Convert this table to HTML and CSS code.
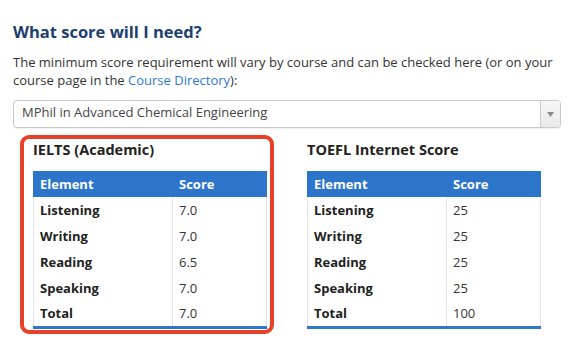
FILE: index.html
```html
<!DOCTYPE html>
<html lang="en">
<head>
<meta charset="utf-8">
<title>What score will I need?</title>
<link rel="stylesheet" href="styles.css">
</head>
<body>
<section class="scores">
  <h2 class="title">What score will I need?</h2>
  <p class="intro">The minimum score requirement will vary by course and can be checked here (or on your course page in the <a href="#" class="link">Course Directory</a>):</p>
  <div class="select">
    <span class="select-value">MPhil in Advanced Chemical Engineering</span>
    <span class="select-arrow"><svg width="7" height="5" viewBox="0 0 7 5"><path d="M0 0h7L3.5 5z" fill="#8a8a8a"/></svg></span>
  </div>
  <div class="tests">
    <div class="test highlight">
      <h3 class="test-name">IELTS (Academic)</h3>
      <table class="score-table">
        <thead><tr><th>Element</th><th>Score</th></tr></thead>
        <tbody>
          <tr><td>Listening</td><td>7.0</td></tr>
          <tr><td>Writing</td><td>7.0</td></tr>
          <tr><td>Reading</td><td>6.5</td></tr>
          <tr><td>Speaking</td><td>7.0</td></tr>
          <tr><td>Total</td><td>7.0</td></tr>
        </tbody>
      </table>
    </div>
    <div class="test">
      <h3 class="test-name">TOEFL Internet Score</h3>
      <table class="score-table">
        <thead><tr><th>Element</th><th>Score</th></tr></thead>
        <tbody>
          <tr><td>Listening</td><td>25</td></tr>
          <tr><td>Writing</td><td>25</td></tr>
          <tr><td>Reading</td><td>25</td></tr>
          <tr><td>Speaking</td><td>25</td></tr>
          <tr><td>Total</td><td>100</td></tr>
        </tbody>
      </table>
    </div>
  </div>
</section>
</body>
</html>
```
FILE: styles.css
```css
html, body {
  margin: 0;
  padding: 0;
  background: #fff;
}
body {
  font-family: "Open Sans", "Noto Sans", sans-serif;
  color: #333;
}
.scores {
  padding: 21px 8px 0 13px;
}
.title {
  margin: 0;
  font-size: 16.5px;
  line-height: 22px;
  font-weight: 700;
  color: #1d3f6f;
}
.intro {
  margin: 10px 0 0;
  font-size: 13px;
  line-height: 18px;
  color: #333;
}
.link {
  color: #2f78d2;
  text-decoration: none;
}
.select {
  margin-top: 11px;
  width: 548px;
  box-sizing: border-box;
  height: 28px;
  border: 1px solid #c9c9c9;
  border-radius: 4px;
  display: flex;
  background: #fff;
  box-shadow: 0 1px 1px rgba(0,0,0,0.06);
}
.select-value {
  flex: 1;
  padding-left: 8px;
  font-size: 13px;
  line-height: 22px;
  color: #444;
}
.select-arrow {
  width: 19px;
  border-left: 1px solid #c9c9c9;
  background: linear-gradient(#f7f7f7, #e9e9e9);
  border-radius: 0 3px 3px 0;
  display: flex;
  align-items: center;
  justify-content: center;
}
.tests {
  margin-top: 7px;
  margin-left: 7px;
  display: flex;
  gap: 20px;
  align-items: flex-start;
}
.test {
  border: 4px solid transparent;
  padding: 1px 3px 1px 9px;
}
.test.highlight {
  border-color: #e8412a;
  border-radius: 9px;
}
.test-name {
  margin: 0 0 11px;
  font-size: 14.5px;
  line-height: 20px;
  font-weight: 700;
  color: #222;
}
.score-table {
  border-collapse: collapse;
  width: 234px;
  font-size: 13px;
  border-bottom: 3px solid #2f76cc;
}
.score-table th,
.score-table td {
  height: 26px;
  padding: 0 6px;
  text-align: left;
  box-sizing: border-box;
}
.score-table th {
  background: #2c75cb;
  color: #fff;
  font-weight: 700;
  border-left: 1px solid #2c75cb;
  border-right: 1px solid #2c75cb;
}
.score-table th + th {
  border-left: 1px solid #b9d1ee;
}
.score-table th:first-child,
.score-table td:first-child {
  width: 139px;
}
.score-table td {
  border-left: 1px solid #dfe5ee;
  border-right: 1px solid #dfe5ee;
  color: #333;
}
.score-table td:first-child {
  font-weight: 700;
  color: #222;
}
```
